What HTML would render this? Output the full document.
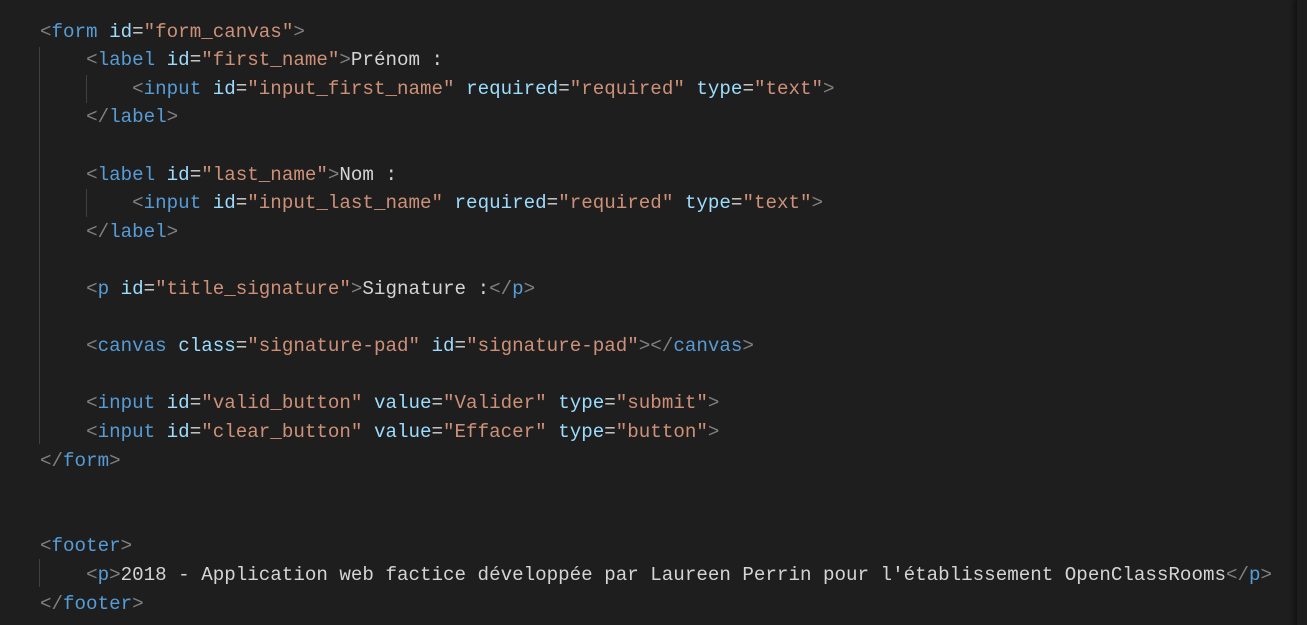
<!DOCTYPE html>
<html><head><meta charset="utf-8"><style>
html,body{margin:0;padding:0;background:#1e1e1e;width:1307px;height:625px;overflow:hidden}
pre{position:absolute;left:40px;top:17.7px;margin:0;font-family:"Liberation Mono",monospace;font-size:19.2px;line-height:28.6px;color:#d4d4d4;white-space:pre}
.t{color:#569cd6}.b{color:#808080}.a{color:#9cdcfe}.s{color:#ce9178}
.g{position:absolute;width:1px;background:#404040}
.mm{position:absolute;left:1297px;top:0;width:10px;height:625px;background:#1e1e1e;box-shadow:-3px 0 4px #111}
</style></head><body>
<div class="g" style="left:39px;top:47px;height:397px"></div>
<div class="g" style="left:86px;top:75px;height:28px"></div>
<div class="g" style="left:86px;top:189px;height:28px"></div>
<div class="g" style="left:39px;top:559px;height:28px"></div>
<pre><span class="b">&lt;</span><span class="t">form</span> <span class="a">id</span>=<span class="s">"form_canvas"</span><span class="b">&gt;</span>
    <span class="b">&lt;</span><span class="t">label</span> <span class="a">id</span>=<span class="s">"first_name"</span><span class="b">&gt;</span>Prénom :
        <span class="b">&lt;</span><span class="t">input</span> <span class="a">id</span>=<span class="s">"input_first_name"</span> <span class="a">required</span>=<span class="s">"required"</span> <span class="a">type</span>=<span class="s">"text"</span><span class="b">&gt;</span>
    <span class="b">&lt;/</span><span class="t">label</span><span class="b">&gt;</span>

    <span class="b">&lt;</span><span class="t">label</span> <span class="a">id</span>=<span class="s">"last_name"</span><span class="b">&gt;</span>Nom :
        <span class="b">&lt;</span><span class="t">input</span> <span class="a">id</span>=<span class="s">"input_last_name"</span> <span class="a">required</span>=<span class="s">"required"</span> <span class="a">type</span>=<span class="s">"text"</span><span class="b">&gt;</span>
    <span class="b">&lt;/</span><span class="t">label</span><span class="b">&gt;</span>

    <span class="b">&lt;</span><span class="t">p</span> <span class="a">id</span>=<span class="s">"title_signature"</span><span class="b">&gt;</span>Signature :<span class="b">&lt;/</span><span class="t">p</span><span class="b">&gt;</span>

    <span class="b">&lt;</span><span class="t">canvas</span> <span class="a">class</span>=<span class="s">"signature-pad"</span> <span class="a">id</span>=<span class="s">"signature-pad"</span><span class="b">&gt;&lt;/</span><span class="t">canvas</span><span class="b">&gt;</span>

    <span class="b">&lt;</span><span class="t">input</span> <span class="a">id</span>=<span class="s">"valid_button"</span> <span class="a">value</span>=<span class="s">"Valider"</span> <span class="a">type</span>=<span class="s">"submit"</span><span class="b">&gt;</span>
    <span class="b">&lt;</span><span class="t">input</span> <span class="a">id</span>=<span class="s">"clear_button"</span> <span class="a">value</span>=<span class="s">"Effacer"</span> <span class="a">type</span>=<span class="s">"button"</span><span class="b">&gt;</span>
<span class="b">&lt;/</span><span class="t">form</span><span class="b">&gt;</span>


<span class="b">&lt;</span><span class="t">footer</span><span class="b">&gt;</span>
    <span class="b">&lt;</span><span class="t">p</span><span class="b">&gt;</span>2018 - Application web factice développée par Laureen Perrin pour l'établissement OpenClassRooms<span class="b">&lt;/</span><span class="t">p</span><span class="b">&gt;</span>
<span class="b">&lt;/</span><span class="t">footer</span><span class="b">&gt;</span></pre>
<div class="mm"></div>
</body></html>
